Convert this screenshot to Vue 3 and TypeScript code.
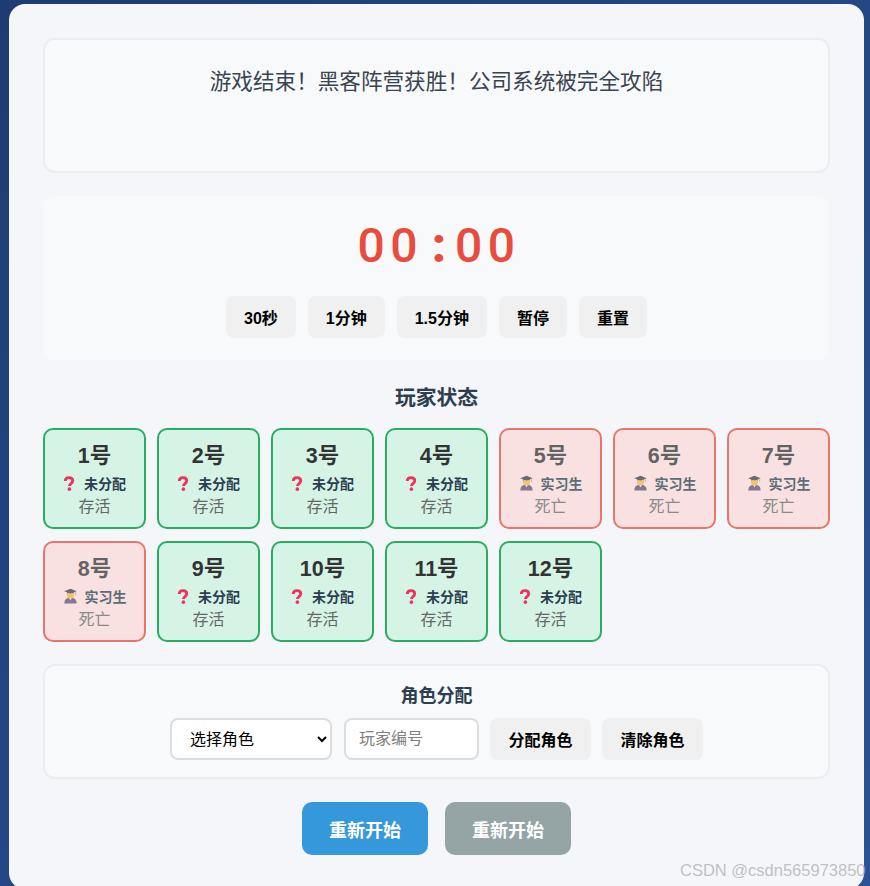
<script setup lang="ts">
interface Player { id: number; dead: boolean }
const players: Player[] = Array.from({ length: 12 }, (_, i) => ({
  id: i + 1,
  dead: i >= 4 && i <= 7,
}))
const timerButtons = ['30秒', '1分钟', '1.5分钟', '暂停', '重置']
const message = '游戏结束\uFF01黑客阵营获胜\uFF01公司系统被完全攻陷'
</script>

<template>
  <main class="card">
    <section class="message">{{ message }}</section>

    <section class="timer">
      <div class="clock"><span class="digits">00</span><span class="colon">:</span><span class="digits last">00</span></div>
      <div class="row timer-row">
        <button v-for="b in timerButtons" :key="b" class="btn">{{ b }}</button>
      </div>
    </section>

    <h3 class="heading">玩家状态</h3>
    <div class="grid">
      <div v-for="p in players" :key="p.id" class="player" :class="{ dead: p.dead }">
        <div class="num">{{ p.id }}号</div>
        <div class="role" :class="{ unassigned: !p.dead }">
          <svg v-if="p.dead" class="ico" viewBox="-1 0 15 16">
            <path d="M.4 16c0-4.200 2.700-6 6.600-6s6.600 1.800 6.600 6z" fill="#5a4f74" />
            <path d="M5.500 10.200L7 12.800l1.500-2.600z" fill="#e8e4ee" />
            <ellipse cx="7" cy="7" rx="3.800" ry="4" fill="#efb53c" />
            <path d="M3.200 5.500c1.100-1.300 6.500-1.300 7.600 0l-.3-2.200H3.500z" fill="#5a4a3a" />
            <path d="M7 .2L13.800 2.800 7 5.200.2 2.800z" fill="#3f3a4c" />
            <path d="M12.500 3.400v3.600" stroke="#dfa42c" stroke-width="1" fill="none" />
          </svg>
          <svg v-else class="ico q" viewBox="0 0 12 16">
            <path d="M2 5.300C2 2.900 3.800 1.700 6 1.700s4 1.300 4 3.400c0 2.900-3.500 3-3.500 5.500" fill="none" stroke="#f0305f" stroke-width="3" />
            <circle cx="6.400" cy="14" r="1.900" fill="#f0305f" />
          </svg>
          <span>{{ p.dead ? '实习生' : '未分配' }}</span>
        </div>
        <div class="status">{{ p.dead ? '死亡' : '存活' }}</div>
      </div>
    </div>

    <section class="assign">
      <h4 class="assign-title">角色分配</h4>
      <div class="row">
        <select class="field select">
          <option>选择角色</option>
        </select>
        <input class="field input" placeholder="玩家编号" />
        <button class="btn wide">分配角色</button>
        <button class="btn wide">清除角色</button>
      </div>
    </section>

    <div class="actions">
      <button class="big blue">重新开始</button>
      <button class="big grey">重新开始</button>
    </div>
  </main>
  <div class="watermark">CSDN @csdn565973850</div>
</template>

<style>
html, body {
  margin: 0;
  height: 886px;
  overflow: hidden;
}
body {
  background: linear-gradient(135deg, #1e3c72 0%, #2a5298 100%);
}
</style>

<style scoped>
* {
  box-sizing: border-box;
}
.card {
  width: 855px;
  height: 885px;
  margin: 4px 0 0 9px;
  padding: 34px;
  background: #f4f6fa;
  border-radius: 16px;
  font-family: "Liberation Sans", "Noto Sans CJK SC", sans-serif;
  color: #333;
}
.message {
  height: 135px;
  padding-top: 26px;
  text-align: center;
  font-size: 21.600px;
  line-height: 32px;
  color: #3a4450;
  background: #f8f9fb;
  border: 2px solid #ebedf0;
  border-radius: 12px;
}
.timer {
  margin-top: 23px;
  height: 164px;
  padding-top: 20px;
  background: #f8f9fb;
  border-radius: 12px;
}
.clock {
  height: 60px;
  line-height: 60px;
  display: flex;
  justify-content: center;
  font-family: Roboto, "Liberation Sans", sans-serif;
  font-size: 48px;
  font-weight: 500;
  color: #e74c3c;
}
.digits {
  letter-spacing: 5.500px;
}
.digits.last {
  margin-right: -5px;
}
.colon {
  width: 32px;
  text-align: center;
  font-weight: 900;
}
.row {
  display: flex;
  justify-content: center;
  gap: 11px;
}
.timer-row {
  margin-top: 20px;
  gap: 12px;
}
.btn {
  height: 42px;
  padding: 0 18px;
  border: none;
  border-radius: 8px;
  background: #f0f0f0;
  color: #000;
  font: bold 16px "Liberation Sans", "Noto Sans CJK SC", sans-serif;
}
.btn.wide {
  padding: 0 18.500px;
}
.heading {
  margin: 24px 0 0;
  height: 28px;
  line-height: 28px;
  text-align: center;
  font-size: 20.800px;
  font-weight: 700;
  color: #2c3e50;
}
.grid {
  margin-top: 16px;
  display: grid;
  grid-template-columns: repeat(7, 1fr);
  grid-auto-rows: 101px;
  gap: 12px 11px;
}
.player {
  padding-top: 10.500px;
  text-align: center;
  background: #d5f4e6;
  border: 2px solid #27ae60;
  border-radius: 10px;
}
.player.dead {
  background: #fadbd8;
  border-color: #e74c3c;
  opacity: 0.75;
}
.num {
  height: 30px;
  line-height: 30px;
  font-size: 21.500px;
  font-weight: 700;
  color: #333;
}
.role {
  height: 24px;
  display: flex;
  align-items: center;
  justify-content: center;
  gap: 8px;
  font-size: 14px;
  font-weight: 700;
  color: #2c3e50;
}
.role.unassigned {
  gap: 9px;
}
.ico {
  width: 14px;
  height: 16px;
  flex: none;
}
.ico.q {
  width: 12px;
  height: 15px;
  margin-top: 2px;
}
.status {
  height: 22px;
  margin-top: 1px;
  line-height: 22px;
  font-size: 16px;
  color: #666;
}
.assign {
  margin-top: 22px;
  height: 115px;
  padding-top: 18px;
  text-align: center;
  background: #f8f9fb;
  border: 2px solid #ebedf0;
  border-radius: 12px;
}
.assign-title {
  margin: 0 0 10px;
  height: 24px;
  line-height: 24px;
  font-size: 18px;
  font-weight: 700;
  color: #2c3e50;
}
.field {
  height: 42px;
  border: 2px solid #ddd;
  border-radius: 8px;
  background: #fff;
  font: 16px "Liberation Sans", "Noto Sans CJK SC", sans-serif;
  color: #000;
}
.select {
  width: 162px;
  padding: 0 14px;
  margin-right: 1px;
}
.input {
  width: 135px;
  padding: 0 13px;
}
.input::placeholder {
  color: #808080;
}
.actions {
  margin-top: 23px;
  display: flex;
  justify-content: center;
  gap: 17px;
}
.big {
  width: 126px;
  height: 53px;
  border: none;
  border-radius: 10px;
  color: #fff;
  font: bold 18px "Liberation Sans", "Noto Sans CJK SC", sans-serif;
}
.blue {
  background: #3498db;
}
.grey {
  background: #95a5a6;
}
.watermark {
  position: absolute;
  left: 680px;
  top: 861px;
  font: 16.500px "Liberation Sans", sans-serif;
  color: rgba(140, 140, 140, 0.55);
  text-shadow: 0 0 1px rgba(255, 255, 255, 0.6);
  white-space: nowrap;
}
</style>
